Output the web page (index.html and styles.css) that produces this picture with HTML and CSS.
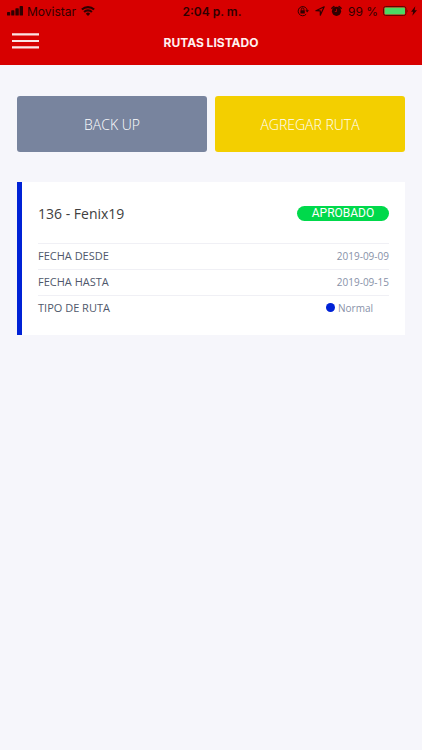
FILE: index.html
```html
<!DOCTYPE html>
<html lang="es">
<head>
<meta charset="utf-8">
<meta name="viewport" content="width=device-width, initial-scale=1">
<title>Rutas listado</title>
<link rel="stylesheet" href="styles.css">
</head>
<body>
<header class="header">
  <div class="status">
    <div class="status-left">
      <svg width="17" height="10" viewBox="0 0 17 10" fill="currentColor" aria-hidden="true"><rect x="0" y="6" width="3.2" height="3.6" rx=".7"/><rect x="4.2" y="4.3" width="3.2" height="5.3" rx=".7"/><rect x="8.4" y="2.3" width="3.4" height="7.3" rx=".7"/><rect x="12.6" y="0" width="3.4" height="9.6" rx=".7"/></svg>
      <span>Movistar</span>
      <svg class="wifi" width="14" height="10" viewBox="0 0 14 10" aria-hidden="true"><path d="M.9 3.6a8.7 8.7 0 0 1 12.2 0M3.1 6a5.5 5.5 0 0 1 7.8 0" fill="none" stroke="currentColor" stroke-width="2.1"/><path d="M4.8 7.7a3.1 3.1 0 0 1 4.4 0L7 9.9z" fill="currentColor"/></svg>
    </div>
    <span class="clock">2:04 p. m.</span>
    <div class="status-right">
      <svg width="12" height="12" viewBox="0 0 12 12" aria-hidden="true"><path d="M9.2 9.2A4.6 4.6 0 1 1 10.3 5.6" fill="none" stroke="currentColor"/><path d="M8.4 5.2h3.6l-1.8 2.3z" fill="currentColor"/><rect x="3.4" y="5.3" width="4.4" height="3.3" rx=".4" fill="currentColor"/><path d="M4.3 5.5V4.3a1.3 1.3 0 0 1 2.6 0v1.2" fill="none" stroke="currentColor" stroke-width=".9"/></svg>
      <svg width="10" height="12" viewBox="0 0 10 12" aria-hidden="true"><path d="M.9 5.7L9.2 1.8 5.3 10.2V5.9z" fill="none" stroke="currentColor" stroke-width="1.2" stroke-linejoin="round"/></svg>
      <svg width="11" height="12" viewBox="0 0 11 12" aria-hidden="true"><circle cx="5.5" cy="6.3" r="4.6" fill="currentColor"/><path d="M.9 3.3L2.9 1.5M10.1 3.3L8.1 1.5" stroke="currentColor" stroke-width="1.5" stroke-linecap="round"/><path d="M5.5 3.9v2.6H3.8" fill="none" stroke="#d70000" stroke-width=".7"/></svg>
      <span>99 %</span>
      <svg width="26" height="10" viewBox="0 0 26 10" aria-hidden="true"><rect x=".5" y=".5" width="22.5" height="9" rx="2.2" fill="none" stroke="#650000"/><rect x="1.5" y="1.5" width="20.5" height="7" rx="1" fill="#4cd964"/><path d="M24 3.4q1.4 1.6 0 3.2z" fill="#650000"/></svg>
      <svg width="6" height="10" viewBox="0 0 6 10" aria-hidden="true"><path d="M4.3.2L0 5.7h2.2l-.9 4.1L6 4.2H3.6z" fill="currentColor"/></svg>
    </div>
  </div>
  <div class="navbar">
    <button class="menu" type="button" aria-label="Menú"><svg width="27" height="16" viewBox="0 0 27 16" aria-hidden="true"><path d="M0 1.4h27M0 8h27M0 14.4h27" stroke="#fbe3e3" stroke-width="2.2"/></svg></button>
    <h1 class="title">RUTAS LISTADO</h1>
  </div>
</header>
<main class="content">
  <div class="actions">
    <button class="action backup" type="button">BACK UP</button>
    <button class="action add" type="button">AGREGAR RUTA</button>
  </div>
  <article class="card">
    <div class="card-head">
      <h2 class="name">136 - Fenix19</h2>
      <span class="badge">APROBADO</span>
    </div>
    <dl class="details">
      <div class="row"><dt>FECHA DESDE</dt><dd>2019-09-09</dd></div>
      <div class="row"><dt>FECHA HASTA</dt><dd>2019-09-15</dd></div>
      <div class="row"><dt>TIPO DE RUTA</dt><dd class="type"><span class="dot"></span>Normal</dd></div>
    </dl>
  </article>
</main>
</body>
</html>
```
FILE: styles.css
```css
* { box-sizing: border-box; }

body {
  margin: 0;
  background: #f6f6fb;
  font-family: "Open Sans", "Noto Sans", sans-serif;
}

h1, h2, dl, dd { margin: 0; }

button {
  border: 0;
  padding: 0;
  font: inherit;
  cursor: pointer;
}

svg { display: block; flex: none; }

.header {
  background: #d70000;
  font-family: Inter, sans-serif;
  padding-bottom: 6px;
}

.status {
  display: grid;
  grid-template-columns: 1fr auto 1fr;
  align-items: center;
  height: 22px;
  padding: 0 5px 0 7px;
  color: #300000;
  font-size: 12px;
}

.status-left, .status-right {
  display: flex;
  align-items: center;
  gap: 3px;
  white-space: nowrap;
}

.wifi { margin-left: 2px; }

.status-right {
  justify-content: flex-end;
  gap: 6px;
}

.status-right span { margin-right: -1px; }

.status-right svg:last-child { margin-left: -4px; }

.clock { font-weight: 600; }

.navbar {
  display: grid;
  grid-template-columns: 27px 1fr 27px;
  align-items: center;
  height: 37px;
  padding: 0 12px;
}

.menu { background: none; }

.title {
  color: #fff0f0;
  font-size: 12px;
  font-weight: 700;
  line-height: 16px;
  padding-top: 4px;
  text-align: center;
}

.content { padding: 31px 17px; }

.actions {
  display: grid;
  grid-template-columns: 1fr 1fr;
  gap: 8px;
}

.action {
  height: 56px;
  border-radius: 3px;
  color: #fff;
  font-size: 14px;
  font-weight: 300;
}

.backup { background: #78849e; }

.add { background: #f3cf00; }

.card {
  margin-top: 30px;
  padding: 16px 16px 14px;
  border-left: 5px solid #0022d6;
  background: #fff;
}

.card-head {
  display: flex;
  align-items: center;
  justify-content: space-between;
  height: 30px;
  margin-bottom: 15px;
}

.name {
  color: #404040;
  font-size: 14px;
  font-weight: 400;
}

.badge {
  width: 92px;
  border-radius: 8px;
  background: #00d94b;
  color: #fff;
  font-family: Roboto, sans-serif;
  font-size: 12px;
  line-height: 15px;
  text-align: center;
}

.row {
  display: flex;
  align-items: center;
  justify-content: space-between;
  height: 26px;
  padding-bottom: 2px;
  border-top: 1px solid #f0f0f5;
  color: #4f586b;
  font-size: 11px;
}

.row dd {
  color: #8791a8;
  font-size: 10px;
}

.row .type {
  display: flex;
  align-items: center;
  gap: 3px;
  padding-right: 16px;
}

.dot {
  width: 9px;
  height: 9px;
  border-radius: 50%;
  background: #0022d6;
}
```
